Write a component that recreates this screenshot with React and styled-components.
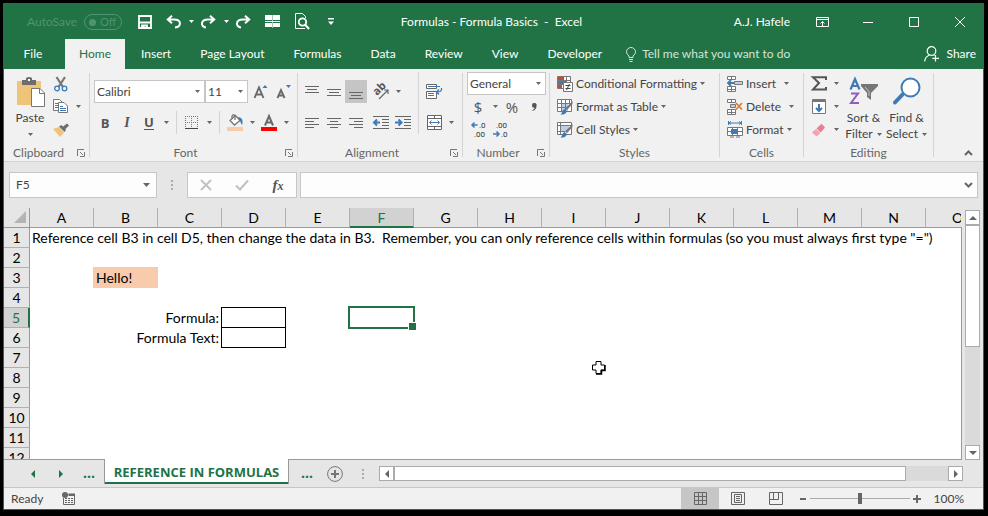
import React from 'react';
import styled, { createGlobalStyle, css } from 'styled-components';

const green = '#217346';
const ink = '#666666';
const blue = '#3f7ab5';

const GlobalStyle = createGlobalStyle`
  * { box-sizing: border-box; }
  body { margin: 0; background: #000; }
  body, button, input, select {
    font: 12px/16px Lato, "Open Sans", sans-serif;
    color: #444;
  }
  button, input, select { margin: 0; padding: 0; border: 0; background: none; border-radius: 0; }
  svg { display: block; flex: none; overflow: visible; }
`;

const Frame = styled.div`
  display: flex;
  height: 100vh;
  padding: 3px 4px 6px 3px;
  background: #000;
`;
const Window = styled.main`
  flex: 1;
  min-width: 0;
  display: flex;
  flex-direction: column;
  border: 1px solid ${green};
  background: #e6e6e6;
`;

/* Title bar */
const TitleBar = styled.header`
  display: grid;
  grid-template-columns: 1fr auto 1fr;
  align-items: center;
  height: 35px;
  background: ${green};
  color: #fff;
`;
const QuickAccess = styled.div`
  display: flex;
  align-items: center;
  padding-left: 23px;
`;
const AutoSave = styled.label`
  display: flex;
  align-items: center;
  gap: 7px;
  margin-right: 12px;
  padding-top: 1px;
  color: #4f9470;
`;
const Toggle = styled.button`
  display: flex;
  align-items: center;
  justify-content: space-between;
  width: 38px;
  height: 16px;
  padding: 0 5px 0 4px;
  border: 1px solid #4f9470;
  border-radius: 8px;
  color: #4f9470;
  font-size: 11px;
  line-height: 14px;
  &::before {
    content: "";
    width: 7px;
    height: 7px;
    border-radius: 50%;
    background: #4f9470;
  }
`;
const QuickButton = styled.button`
  display: grid;
  place-items: center;
  width: ${(p) => p.$w || 22}px;
  height: 24px;
  margin-right: ${(p) => p.$after || 0}px;
  color: #fff;
`;
const DocTitle = styled.h1`
  margin: 0;
  padding-right: 4px;
  font: inherit;
  white-space: pre;
`;
const WindowControls = styled.div`
  display: flex;
  align-items: center;
  justify-content: flex-end;
`;
const UserName = styled.span`
  margin-right: 9px;
`;
const ControlButton = styled.button`
  display: grid;
  place-items: center;
  width: 46px;
  height: 32px;
  color: #fff;
`;

/* Ribbon tabs */
const TabStrip = styled.nav`
  display: flex;
  align-items: stretch;
  gap: 3px;
  height: 30px;
  padding-right: 7px;
  background: ${green};
`;
const RibbonTab = styled.button`
  min-width: ${(p) => p.$min || 0}px;
  padding: 0 13px;
  color: ${(p) => (p.$active ? green : '#fff')};
  background: ${(p) => (p.$active ? '#f1f1f1' : 'transparent')};
  white-space: nowrap;
`;
const TellMe = styled.button`
  display: flex;
  align-items: center;
  gap: 6px;
  margin: 0 auto 0 8px;
  color: #d3e3da;
`;
const Share = styled.button`
  display: flex;
  align-items: center;
  gap: 7px;
  color: #fff;
`;

/* Ribbon */
const Ribbon = styled.section`
  display: flex;
  height: 93px;
  background: #f1f1f1;
  border-bottom: 1px solid #d2d2d2;
`;
const GroupBox = styled.section`
  flex: none;
  display: flex;
  flex-direction: column;
  justify-content: space-between;
  width: ${(p) => p.$w}px;
  padding: 3px 0 0 ${(p) => p.$pad}px;
`;
const GroupBody = styled.div`
  display: flex;
`;
const GroupFooter = styled.footer`
  display: flex;
  align-items: center;
  gap: 4px;
  margin-left: -${(p) => p.$pad}px;
  padding: 0 4px 0 ${(p) => (p.$launcher ? 0 : 4)}px;
  height: 16px;
  color: #666;
`;
const GroupTitle = styled.span`
  flex: 1;
  text-align: center;
`;
const Divider = styled.i`
  flex: none;
  width: 1px;
  margin: 4px 0;
  background: #d4d4d4;
`;
const ToolDivider = styled.i`
  flex: none;
  align-self: stretch;
  width: 1px;
  margin: 0 4px;
  background: #d4d4d4;
`;
const Column = styled.div`
  display: flex;
  flex-direction: column;
  gap: ${(p) => p.$gap || 0}px;
  padding-top: ${(p) => p.$top || 0}px;
`;
const ToolRow = styled.div`
  display: flex;
  align-items: center;
  height: 23px;
`;
const ToolButton = styled.button`
  display: grid;
  place-items: center;
  width: 22px;
  height: 23px;
  margin-left: ${(p) => p.$before || 0}px;
  background: ${(p) => (p.$on ? '#c5c5c5' : 'transparent')};
`;
const DropButton = styled.button`
  display: grid;
  place-items: center;
  width: 12px;
  height: 23px;
`;
const Letter = styled.span`
  font-size: ${(p) => p.$size || 14}px;
  font-family: "Open Sans", sans-serif;
  color: #555;
  ${(p) => p.$bold && css`font-weight: 700;`}
  ${(p) => p.$italic && css`font-style: italic; font-family: "Liberation Serif", serif; font-weight: 700;`}
  ${(p) => p.$under && css`border-bottom: 1px solid #555; line-height: 13px;`}
`;
const BigButton = styled.button`
  display: flex;
  flex-direction: column;
  align-items: center;
  width: ${(p) => p.$w}px;
  padding-top: 5px;
  white-space: nowrap;
`;
const BigCaption = styled.span`
  display: flex;
  align-items: center;
  gap: 4px;
  height: 16px;
`;
const BigArt = styled.span`
  height: 33px;
`;
const MenuButton = styled.button`
  display: flex;
  align-items: center;
  gap: 3px;
  height: 23px;
  white-space: nowrap;
`;
const MenuCaption = styled.span`
  padding-right: ${(p) => (p.$split ? 5 : 0)}px;
`;
const ComboBox = styled.label`
  display: grid;
  align-items: center;
  width: ${(p) => p.$w}px;
  height: 23px;
  border: 1px solid #c6c6c6;
  background: #fff;
  > select, > svg { grid-area: 1 / 1; }
  > svg { justify-self: end; margin-right: 4px; pointer-events: none; }
  > select { width: 100%; padding-left: 2px; appearance: none; outline: 0; }
`;
const Collapse = styled.button`
  align-self: flex-end;
  margin: 0 10px 5px auto;
`;

/* Formula bar */
const FormulaBar = styled.section`
  display: flex;
  align-items: stretch;
  height: 46px;
  padding: 10px 5px;
`;
const FieldBox = styled.div`
  display: flex;
  align-items: center;
  width: ${(p) => (p.$w ? p.$w + 'px' : 'auto')};
  flex: ${(p) => (p.$w ? 'none' : '1')};
  padding: 0 ${(p) => p.$pad ?? 6}px;
  margin-left: ${(p) => p.$before || 0}px;
  border: 1px solid #c6c6c6;
  background: #fdfdfd;
`;
const FieldInput = styled.input`
  flex: 1;
  min-width: 0;
  outline: 0;
`;
const Grip = styled.div`
  display: grid;
  place-items: center;
  width: ${(p) => p.$w}px;
`;
const FxButton = styled.button`
  flex: 1;
  display: grid;
  place-items: center;
  height: 24px;
`;
const FxLabel = styled.span`
  font: italic 700 15px/18px "Liberation Serif", serif;
  color: #555;
  > small { font-size: 12px; }
`;

/* Worksheet */
const WorkArea = styled.div`
  flex: 1;
  min-height: 0;
  display: flex;
  gap: 3px;
  padding-right: 3px;
`;
const Sheet = styled.div`
  position: relative;
  flex: 1;
  min-width: 0;
  overflow: hidden;
  padding-right: 1px;
  border-bottom: 1px solid #999;
  background: linear-gradient(#e6e6e6 0 19px, #999 19px);
`;
const SheetView = styled.div`
  height: 100%;
  overflow: hidden;
  background: linear-gradient(#e6e6e6 0 20px, #fff 20px);
`;
const Grid = styled.table`
  table-layout: fixed;
  width: 986px;
  border-spacing: 0;
  font-size: 14px;
  line-height: 19px;
  color: #000;
`;
const Corner = styled.th`
  width: 26px;
  height: 20px;
  padding: 0 3px 2px 0;
  border-right: 1px solid #999;
  border-bottom: 1px solid #999;
  > svg { margin-left: auto; }
`;
const ColumnHead = styled.th`
  width: 64px;
  height: 20px;
  padding: 1px 0 0;
  font-weight: 400;
  line-height: 18px;
  border-right: 1px solid #b0b0b0;
  border-bottom: 1px solid #999;
  ${(p) => p.$current && css`
    color: ${green};
    background: #d2d2d2;
    border-bottom: 2px solid ${green};
    line-height: 17px;
  `}
`;
const RowHead = styled.th`
  height: 20px;
  padding: 0;
  font-weight: 400;
  background: #e6e6e6;
  border-right: 1px solid #999;
  border-bottom: 1px solid #b0b0b0;
  ${(p) => p.$current && css`
    color: ${green};
    background: #d2d2d2;
    border-right: 2px solid ${green};
  `}
`;
const Cell = styled.td`
  position: relative;
  height: 20px;
  padding: 0;
  white-space: pre;
`;
const CellText = styled.div`
  display: flex;
  height: 20px;
  padding: 0 3px 0 2px;
  justify-content: ${(p) => (p.$right ? 'flex-end' : 'flex-start')};
`;
const CellBox = styled.div`
  height: 21px;
  margin: -1px 0 0 -1px;
  border: 1px solid ${(p) => p.$fill || '#000'};
  background: ${(p) => p.$fill || 'transparent'};
`;
const Selection = styled.div`
  position: absolute;
  inset: -2px -1px -1px -2px;
  border: 2px solid ${green};
  &::after {
    content: "";
    position: absolute;
    right: -4px;
    bottom: -4px;
    width: 7px;
    height: 7px;
    border: 1px solid #fff;
    background: ${green};
  }
`;
const Pointer = styled.svg`
  position: absolute;
  left: 587px;
  top: 152px;
`;
const ScrollTrack = styled.div`
  display: flex;
  flex-direction: ${(p) => (p.$vertical ? 'column' : 'row')};
  ${(p) => (p.$vertical ? css`width: 15px; margin-top: 2px;` : css`flex: 1; height: 15px;`)}
  background: #dadada;
`;
const ScrollButton = styled.button`
  display: grid;
  place-items: center;
  flex: none;
  width: 15px;
  height: 15px;
  border: 1px solid #ababab;
  background: #fff;
`;
const ScrollThumb = styled.div`
  flex: ${(p) => p.$share} 1 0;
  border: 1px solid #ababab;
  background: #fff;
`;
const ScrollRest = styled.div`
  flex: ${(p) => p.$share} 1 0;
`;

/* Sheet tabs and status bar */
const SheetTabs = styled.nav`
  display: flex;
  align-items: center;
  height: 27px;
  padding-right: 20px;
`;
const NavButton = styled.button`
  display: grid;
  place-items: center;
  width: 28px;
  height: 24px;
  padding-bottom: ${(p) => (p.$raised ? 2 : 0)}px;
  color: ${green};
  font: 700 14px/16px "Open Sans", sans-serif;
`;
const NavGroup = styled.div`
  display: flex;
  width: 100px;
  padding-left: 15px;
`;
const MoreGroup = styled.div`
  display: flex;
  align-items: center;
  padding: 0 2px 0 4px;
`;
const SheetTab = styled.button`
  align-self: flex-start;
  width: 185px;
  height: 25px;
  margin-top: -1px;
  position: relative;
  border: solid #999;
  border-width: 0 1px;
  box-shadow: inset 0 -2px 0 ${green};
  background: #fff;
  color: ${green};
  font: 700 13px/16px "Open Sans", sans-serif;
  white-space: nowrap;
`;
const StatusBar = styled.footer`
  display: flex;
  align-items: center;
  height: 22px;
  padding: 0 19px 0 7px;
  border-top: 1px solid #c6c6c6;
  background: #f1f1f1;
`;
const StatusText = styled.span`
  margin-right: 19px;
`;
const ViewButtons = styled.div`
  display: flex;
  align-self: stretch;
  margin-left: auto;
  margin-right: 1px;
`;
const ViewButton = styled.button`
  display: grid;
  place-items: center;
  width: 38px;
  background: ${(p) => (p.$on ? '#c6c6c6' : 'transparent')};
`;
const ZoomButton = styled.button`
  display: grid;
  place-items: center;
  width: 14px;
  height: 20px;
`;
const ZoomSlider = styled.input`
  appearance: none;
  width: 100px;
  height: 11px;
  background: linear-gradient(#ababab, #ababab) center / 100% 1px no-repeat;
  &::-webkit-slider-thumb {
    appearance: none;
    width: 4px;
    height: 11px;
    background: #666;
  }
`;
const ZoomValue = styled.output`
  width: 40px;
  text-align: right;
`;

/* Icons */
const Svg = ({ w = 16, h = w, children, ...rest }) => (
  <svg width={w} height={h} viewBox={`0 0 ${w} ${h}`} fill="none" stroke="currentColor" aria-hidden="true" {...rest}>
    {children}
  </svg>
);
const Caret = ({ color = ink, w = 5 }) => (
  <Svg w={w} h={Math.ceil(w / 2)} stroke="none">
    <path d={`M0 0H${w}L${w / 2} ${Math.ceil(w / 2)}Z`} fill={color} />
  </Svg>
);
const Arrow = ({ d, color = ink }) => (
  <Svg w={8} stroke="none"><path d={d} fill={color} /></Svg>
);
const left = 'M6 0V8L2 4Z';
const right = 'M2 0V8L6 4Z';
const up = 'M0 6H8L4 2Z';
const down = 'M0 2H8L4 6Z';

const SaveIcon = () => (
  <Svg w={14}><path d="M1 1H13V13H1ZM1 7.500H13M4 13V10.500H9V13" strokeWidth="1.800" /><path d="M5.500 10V13" strokeWidth="2" /></Svg>
);
const UndoIcon = () => (
  <Svg w={16} h={14} strokeWidth="2"><path d="M6 .8L1.800 4.500L6 8.200M2 4.500H8C16 4.500 15.500 12 9 12.500" /></Svg>
);
const RedoIcon = () => (
  <Svg w={16} h={14} strokeWidth="2"><path d="M10 .8L14.200 4.500L10 8.200M14 4.500H8C0 4.500 .5 12 6 12.500" /></Svg>
);
const PanesIcon = () => (
  <Svg w={15} h={13} stroke="none"><path fill="#fff" d="M0 0H7V5H0ZM8 0H15V5H8ZM0 6H15V7H0ZM0 8H7V12H0ZM8 8H15V12H8ZM7.200 0H7.800V13H7.200Z" /></Svg>
);
const PreviewIcon = () => (
  <Svg w={15} h={17}><path d="M10 15.500H.5V.5H7.500L10.500 3.500V5" /><circle cx="7.500" cy="9" r="3.700" strokeWidth="1.800" /><path d="M10 11.500L14 16" strokeWidth="2.200" /></Svg>
);
const CustomizeIcon = () => (
  <Svg w={6} h={7} stroke="none"><path fill="#fff" d="M0 0H6V1.500H0ZM0 3.500H6L3 7Z" /></Svg>
);
const RibbonModeIcon = () => (
  <Svg w={13} h={10}><path d="M.5 .5H12.500V9.500H.5ZM.5 2.500H12.500M6.500 9V4.500M4.500 6.500L6.500 4.500L8.500 6.500" /></Svg>
);
const BulbIcon = () => (
  <Svg w={10} h={15}><path d="M3 10.500V9C1.500 7.500 .5 6.500 .5 4.800A4.500 4.300 0 0 1 9.500 4.800C9.500 6.500 8.500 7.500 7 9V10.500ZM3 12.500H7M3.500 14.500H6.500" /></Svg>
);
const PersonIcon = () => (
  <Svg w={15} h={16} strokeWidth="1.200"><circle cx="7.500" cy="5" r="4.300" /><path d="M.6 15.500C1 11.500 3 10 5.500 9M9.500 9L10.500 9.500M11.500 9V15.500M8.300 12.300H15" /></Svg>
);

const PasteIcon = () => (
  <Svg w={29} h={31} stroke="none">
    <path d="M1 4H25V28H1Z" fill="#eec478" />
    <path d="M6 3H10V1Q13 -1 16 1V3H20V8H6Z" fill="#6d6d6d" /><path d="M12 2H14V4H12Z" fill="#fff" />
    <path d="M15.500 11.500H24L28.500 16V29.500H15.500Z" fill="#fff" stroke="#777" /><path d="M23.500 12V16.500H28" stroke="#777" />
  </Svg>
);
const CutIcon = () => (
  <Svg w={16} h={16}><path d="M3.500 1L10 11M12 1L5.500 11" stroke="#777" strokeWidth="2.200" /><circle cx="4" cy="12.500" r="2.300" stroke={blue} strokeWidth="1.300" /><circle cx="11.500" cy="12.500" r="2.300" stroke={blue} strokeWidth="1.300" /></Svg>
);
const CopyIcon = () => (
  <Svg w={16} h={15} stroke="#777"><path d="M.5 .5H6.500L9 3V11.500H.5Z" fill="#fff" /><path d="M2 4.500H6M2 6.500H6M2 8.500H5" stroke={blue} /><path d="M5.500 3.500H11L14.500 7V13.500H5.500Z" fill="#fff" /><path d="M7 7.500H10M7 9.500H13M7 11.500H13" stroke={blue} /></Svg>
);
const PainterIcon = () => (
  <Svg w={16} h={14} stroke="none"><path d="M0 6L6 4L11 9.500L7 14Z" fill="#eec478" /><path d="M6 3.500L8.500 2L13 7L11.500 9Z" fill="#6d6d6d" /><path d="M9.500 4L14 .5L16 2.500L12 6.500Z" fill="#6d6d6d" /></Svg>
);
const LauncherIcon = () => (
  <Svg w={8} h={8} stroke="#777"><path d="M.5 7V.5H7M3 3L6 6M7.500 3V7.500H3" /></Svg>
);
const GrowIcon = ({ shrink }) => (
  <Svg w={16} h={16} stroke="none">
    <path d={shrink ? 'M11 1H16L13.500 4Z' : 'M9.500 4H14.500L12 1Z'} fill={blue} />
    <path d={shrink ? 'M2.500 14L6 6L9.500 14M4 11.500H8' : 'M1.500 14L6 3.500L10.500 14M3 10.500H9'} stroke="#6a6a6a" strokeWidth="1.900" />
  </Svg>
);
const BordersIcon = () => (
  <Svg w={14} h={14} stroke="#777"><path d="M.5 0V12M6.500 0V12M12.500 0V12M0 .5H13M0 6.500H13" strokeDasharray="1 1" /><path d="M0 12.500H13" stroke="#444" /></Svg>
);
const FillIcon = () => (
  <Svg w={16} h={17} stroke="none"><path d="M3 6.500L8.500 1.500L13 6.500L7.500 11Z" fill="#fff" stroke="#777" strokeWidth="1.300" /><path d="M5 5V2Q6.500 -.5 8 2V6" stroke="#777" strokeWidth="1.300" /><path d="M11 3C15 3 16.500 7 15 11C13.500 9 13.500 7 11 3Z" fill={blue} /><path d="M0 13H16V17H0Z" fill="#f8cbad" /></Svg>
);
const FontColorIcon = () => (
  <Svg w={16} h={17} stroke="none"><path d="M4 11.500L8 2L12 11.500M5.500 8.500H10.500" stroke="#6a6a6a" strokeWidth="2" /><path d="M0 13H16V17H0Z" fill="#f00" /></Svg>
);
const LinesIcon = ({ rows }) => (
  <Svg w={14} h={14} stroke={ink}><path d={rows.map(([y, a, b]) => `M${a} ${y}.5H${b}`).join('')} /></Svg>
);
const AB = styled.tspan`font: 700 11px "Open Sans", sans-serif;`;
const OrientationIcon = () => (
  <Svg w={18} h={16} stroke="none"><text transform="translate(5 12) rotate(-45)" fill="#555"><AB>ab</AB></text><path d="M7 15L15.500 6.500M12 6H16V10" stroke="#666" strokeWidth="1.200" /></Svg>
);
const IndentIcon = ({ more }) => (
  <Svg w={16} h={13} stroke={ink}><path d="M0 .5H16M9 3.500H16M9 6.500H16M9 9.500H16M0 12.500H16" /><path d={more ? 'M0 6.500H6M3.500 3.500L6.500 6.500L3.500 9.500' : 'M1.500 6.500H7M4 3.500L1 6.500L4 9.500'} stroke={blue} strokeWidth="2" /></Svg>
);
const WrapIcon = () => (
  <Svg w={16} h={15} stroke={ink}><path d="M.5 .5H10.500V4.500H.5ZM.5 7.500H10.500V14.500H.5Z" fill="#fff" /><path d="M2 2.500H14M2 9.500H8M2 11.500H8" stroke={blue} /><path d="M15.500 4C16 7.500 14 8 11 8M13 5.500L10.500 8L13 10.500" stroke={blue} strokeWidth="1.300" /></Svg>
);
const MergeIcon = () => (
  <Svg w={15} h={15} stroke={ink}><path d="M.5 .5H14.500V14.500H.5ZM0 3.500H15M0 11.500H15M7.500 0V3.500M7.500 11.500V15" fill="#fff" /><path d="M2.500 7.500H12.500M4.500 5.500L2.500 7.500L4.500 9.500M10.500 5.500L12.500 7.500L10.500 9.500" stroke={blue} /></Svg>
);
const Digits = styled.tspan`font: 8px Roboto, sans-serif;`;
const DecimalIcon = ({ less }) => (
  <Svg w={16} h={19} stroke="none">
    <text x={less ? 4 : 9} y="8" fill="#333"><Digits>{less ? '.00' : '.0'}</Digits></text>
    <text x={less ? 9 : 4} y="17" fill="#333"><Digits>{less ? '.0' : '.00'}</Digits></text>
    <path d={less ? 'M1 14H7M4.500 11.500L7 14L4.500 16.500' : 'M2 5H7.500M4.500 2.500L2 5L4.500 7.500'} stroke={blue} strokeWidth="1.500" />
  </Svg>
);
const ConditionalIcon = () => (
  <Svg w={16} h={16} stroke="#777"><path d="M.5 .5H13.500V12.500H.5ZM.5 4.500H13.500M.5 8.500H13.500M4.500 0V13M9.500 0V13" fill="#fff" /><path d="M1 1H7V4H1ZM1 9H4V12H1Z" fill="#d24726" stroke="none" /><path d="M1 5H9V8H1Z" fill={blue} stroke="none" /><path d="M6.500 6.500H15.500V15.500H6.500Z" fill="#fff" /><path d="M8.500 9.500H13.500M8.500 12.500H13.500M12.500 8L9.500 14" stroke="#444" /></Svg>
);
const BrushArt = () => (
  <>
    <path d="M15.500 2V5L10 11L8 9.500Z" fill="#777" stroke="none" /><path d="M7.500 10L10 12C9 15 6.500 16 3.500 15.500C5.500 14 5 11 7.500 10Z" fill={blue} stroke="none" />
  </>
);
const TableIcon = () => (
  <Svg w={16} h={16} stroke="#777"><path d="M.5 .5H14.500V12.500H.5Z" fill="#fff" /><path d="M4 4H11V12H4Z" fill="#bdd0e6" stroke="none" /><path d="M.5 4.500H14M.5 8.500H10M4.500 .5V12M8.500 .5V12M12.500 .5V5" /><BrushArt /></Svg>
);
const CellStyleIcon = () => (
  <Svg w={16} h={16} stroke="#777"><path d="M.5 .5H14.500V12.500H.5Z" fill="#fff" /><path d="M4 4H12V10H4Z" fill="#bdd0e6" stroke="none" /><path d="M.5 3.500H14M.5 9.500H8M3.500 .5V12" /><BrushArt /></Svg>
);
const InsertIcon = () => (
  <Svg w={16} h={16} stroke="#777"><path d="M.5 .5H8.500V3.500H.5ZM4.500 .5V3.500M.5 10.500H8.500V15.500H.5ZM4.500 10V15.500M.5 13.500H8.500" fill="#fff" /><path d="M7.500 5.500H15.500V8.500H7.500Z" fill="#bdd0e6" /><path d="M1 7H7M4 4L1 7L4 10" stroke={blue} strokeWidth="1.800" /></Svg>
);
const DeleteIcon = () => (
  <Svg w={16} h={16} stroke="#777"><path d="M.5 .5H8.500V3.500H.5ZM4.500 .5V3.500M.5 10.500H8.500V15.500H.5ZM4.500 10V15.500M.5 13.500H8.500" fill="#fff" /><path d="M3.500 5.500H8.500V8.500H3.500Z" fill="#bdd0e6" /><path d="M9 4L15 10.500M15 4L9 10.500" stroke="#e07b28" strokeWidth="1.700" /></Svg>
);
const FormatIcon = () => (
  <Svg w={16} h={17} stroke="#777"><path d="M1.500 0V4M14.500 0V4M2 2H14M4 .5L2 2L4 3.500M12 .5L14 2L12 3.500" stroke={blue} /><path d="M.5 6.500H15.500V14.500H.5ZM.5 10.500H15.500M5.500 6.500V14.500M10.500 6.500V14.500M3 16H7M9 16H13" fill="#fff" /><path d="M4 8H10V13H4Z" fill={blue} stroke="none" /></Svg>
);
const SumIcon = () => (
  <Svg w={16} h={15} stroke="#555"><path d="M15 4V1.200H2L8 7L2 13.500H15V11" strokeWidth="2" /></Svg>
);
const FillDownIcon = () => (
  <Svg w={14} h={15} stroke="#777"><path d="M.5 .5H13.500V14.500H.5Z" fill="#fff" /><path d="M1 1H13V3H1Z" fill="#777" stroke="none" /><path d="M7 5V12M4 9L7 12L10 9" stroke={blue} strokeWidth="2" /></Svg>
);
const EraserIcon = () => (
  <Svg w={14} h={14} stroke="none"><path d="M0 9.500L4 6L8.500 10L4.500 13.500Z" fill="#f2a3ad" /><path d="M4.500 5.500L9.500 .8L13 4.500L8.800 9.500Z" fill="#e8808e" /></Svg>
);
const SortIcon = () => (
  <Svg w={30} h={28} stroke="none">
    <path d="M1.500 12.500L6 2L10.500 12.500M3 9H9" stroke={blue} strokeWidth="2.200" /><path d="M2 16.500H9L2 26H10" stroke="#8e5fb5" strokeWidth="2" />
    <path d="M12 7H29V9L22 16V23L18 20V16L12 9Z" fill="#777" /><path d="M16 10L20 14.500V19" stroke="#c4c4c4" />
  </Svg>
);
const FindIcon = () => (
  <Svg w={28} h={28} stroke={blue}><path d="M9.500 17.500L2 25.500" strokeWidth="4" strokeLinecap="round" /><circle cx="17.500" cy="10.500" r="9" fill="#fff" strokeWidth="2" /></Svg>
);
const ChevronIcon = ({ flip }) => (
  <Svg w={9} h={6} stroke="#666" strokeWidth="2"><path d={flip ? 'M1 5L4.500 1.500L8 5' : 'M1 1L4.500 4.500L8 1'} /></Svg>
);
const DotsIcon = () => (
  <Svg w={2} h={10} stroke="none"><path fill="#ababab" d="M0 0H2V2H0ZM0 4H2V6H0ZM0 8H2V10H0Z" /></Svg>
);
const AddSheetIcon = () => (
  <Svg w={16} h={16} stroke="#777"><circle cx="8" cy="8" r="7.400" /><path d="M4 8H12M8 4V12" strokeWidth="2" /></Svg>
);
const CommaIcon = () => (
  <Svg w={6} h={8} stroke="none"><path fill="#555" d="M1 2.500A2.300 2.300 0 1 1 5.500 3C5.500 5.500 4 7.500 1.500 8V7C3 6.500 3.500 5.500 3.500 4.700A2.200 2.200 0 0 1 1 2.500Z" /></Svg>
);
const MacroIcon = () => (
  <Svg w={14} h={14} stroke={ink}><circle cx="3" cy="3" r="3" fill={ink} stroke="none" /><path d="M1.500 6V12.500H12.500V2.500H6.500M7 2.500H12" /><path d="M6.500 1.500H13V4H6.500Z" fill={ink} stroke="none" /><path d="M3 6.500H11M3 8.500H11M3 10.500H11" strokeDasharray="2 1" /></Svg>
);
const NormalIcon = () => <Svg w={13} stroke={ink}><path d="M.5 .5H12.500V12.500H.5ZM4.500 0V13M8.500 0V13M0 4.500H13M0 8.500H13" /></Svg>;
const PageIcon = () => <Svg w={14} h={13} stroke={ink}><path d="M.5 .5H13.500V12.500H.5ZM3.500 2.500H10.500V10.500H3.500ZM5 4.500H9M5 6.500H9M5 8.500H9" /></Svg>;
const BreakIcon = () => <Svg w={14} h={13} stroke={ink}><path d="M.5 .5H13.500V12.500H.5ZM4.500 .5V7.500M0 7.500H9.500V0" /></Svg>;
const CellCursor = () => (
  <Pointer width="16" height="16" viewBox="0 0 16 16" aria-hidden="true">
    <path d="M5 1.500H10V5H13.500V10H10V13.500H5V10H1.500V5H5Z" fill="#fff" stroke="#000" />
    <path d="M5 14H10.500V10.500H14V5" fill="none" stroke="#000" strokeWidth="1.500" />
  </Pointer>
);

const topAlign = [[1, 0, 14], [4, 2, 12], [7, 0, 14]];
const midAlign = [[4, 0, 14], [7, 2, 12], [10, 0, 14]];
const lowAlign = [[7, 0, 14], [10, 2, 12], [13, 0, 14]];
const leftText = [[2, 0, 14], [5, 0, 9], [8, 0, 14], [11, 0, 9]];
const centerText = [[2, 0, 14], [5, 3, 11], [8, 0, 14], [11, 3, 11]];
const rightText = [[2, 0, 14], [5, 5, 14], [8, 0, 14], [11, 5, 14]];

const Group = ({ title, w, pad, launcher, children }) => (
  <>
    <GroupBox $w={w} $pad={pad} aria-label={title}>
      <GroupBody>{children}</GroupBody>
      <GroupFooter $pad={pad} $launcher={launcher}>
        <GroupTitle>{title}</GroupTitle>
        {launcher && <button aria-label={`${title} settings`}><LauncherIcon /></button>}
      </GroupFooter>
    </GroupBox>
    <Divider />
  </>
);
const Drop = ({ label }) => <DropButton aria-label={label}><Caret /></DropButton>;
const Combo = ({ label, value, ...rest }) => (
  <ComboBox {...rest}>
    <select aria-label={label} defaultValue={value}><option>{value}</option></select>
    <Caret />
  </ComboBox>
);
const Menu = ({ icon, children, split }) => (
  <MenuButton>{icon}<MenuCaption $split={split}>{children}</MenuCaption><Caret /></MenuButton>
);

const columns = 'ABCDEFGHIJKLMNO'.split('');
const rows = Array.from({ length: 12 }, (_, i) => i + 1);
const cells = {
  A1: <CellText>{'Reference cell B3 in cell D5, then change the data in B3.  Remember, you can only reference cells within formulas (so you must always first type "=")'}</CellText>,
  B3: <CellBox $fill="#f8cbad"><CellText>Hello!</CellText></CellBox>,
  C5: <CellText $right>Formula:</CellText>,
  C6: <CellText $right>Formula Text:</CellText>,
  D5: <CellBox />,
  D6: <CellBox />,
  F5: <Selection />,
};

const Worksheet = () => (
  <Sheet>
    <SheetView>
      <Grid>
        <thead>
          <tr>
            <Corner aria-label="Select all"><Svg w={12} stroke="none"><path d="M12 0V12H0Z" fill="#b4b4b4" /></Svg></Corner>
            {columns.map((c) => <ColumnHead key={c} $current={c === 'F'}>{c}</ColumnHead>)}
          </tr>
        </thead>
        <tbody>
          {rows.map((r) => (
            <tr key={r}>
              <RowHead $current={r === 5}>{r}</RowHead>
              {columns.map((c) => <Cell key={c}>{cells[c + r]}</Cell>)}
            </tr>
          ))}
        </tbody>
      </Grid>
    </SheetView>
    <CellCursor />
  </Sheet>
);

export default function App() {
  return (
    <Frame>
      <GlobalStyle />
      <Window>
        <TitleBar>
          <QuickAccess>
            <AutoSave>AutoSave<Toggle role="switch" aria-checked="false">Off</Toggle></AutoSave>
            <QuickButton aria-label="Save" $after={7}><SaveIcon /></QuickButton>
            <QuickButton aria-label="Undo"><UndoIcon /></QuickButton>
            <QuickButton aria-label="Undo history" $w={12}><Caret color="#fff" /></QuickButton>
            <QuickButton aria-label="Redo" $after={1}><RedoIcon /></QuickButton>
            <QuickButton aria-label="Redo history" $w={12}><Caret color="#fff" /></QuickButton>
            <QuickButton aria-label="Repeat" $after={7}><RedoIcon /></QuickButton>
            <QuickButton aria-label="Freeze panes" $after={8}><PanesIcon /></QuickButton>
            <QuickButton aria-label="Print preview" $after={7}><PreviewIcon /></QuickButton>
            <QuickButton aria-label="Customize toolbar"><CustomizeIcon /></QuickButton>
          </QuickAccess>
          <DocTitle>{'Formulas - Formula Basics  -  Excel'}</DocTitle>
          <WindowControls>
            <UserName>A.J. Hafele</UserName>
            <ControlButton aria-label="Ribbon display options"><RibbonModeIcon /></ControlButton>
            <ControlButton aria-label="Minimize"><Svg w={10}><path d="M0 5.500H10" /></Svg></ControlButton>
            <ControlButton aria-label="Maximize"><Svg w={10}><path d="M.5 .5H9.500V9.500H.5Z" /></Svg></ControlButton>
            <ControlButton aria-label="Close"><Svg w={10}><path d="M0 0L10 10M10 0L0 10" /></Svg></ControlButton>
          </WindowControls>
        </TitleBar>

        <TabStrip>
          <RibbonTab $min={58}>File</RibbonTab>
          <RibbonTab $active $min={60}>Home</RibbonTab>
          {['Insert', 'Page Layout', 'Formulas', 'Data', 'Review', 'View', 'Developer'].map((t) => <RibbonTab key={t}>{t}</RibbonTab>)}
          <TellMe><BulbIcon />Tell me what you want to do</TellMe>
          <Share><PersonIcon />Share</Share>
        </TabStrip>

        <Ribbon>
          <Group title="Clipboard" w={85} pad={8} launcher>
            <BigButton $w={36}>
              <BigArt><PasteIcon /></BigArt>
              <BigCaption>Paste</BigCaption>
              <BigCaption><Caret /></BigCaption>
            </BigButton>
            <Column>
              <ToolRow><ToolButton $before={2} aria-label="Cut"><CutIcon /></ToolButton></ToolRow>
              <ToolRow><ToolButton $before={2} aria-label="Copy"><CopyIcon /></ToolButton><Drop label="Copy options" /></ToolRow>
              <ToolRow><ToolButton $before={2} aria-label="Format painter"><PainterIcon /></ToolButton></ToolRow>
            </Column>
          </Group>

          <Group title="Font" w={207} pad={4} launcher>
            <Column $top={8} $gap={8}>
              <ToolRow>
                <Combo label="Font name" value="Calibri" $w={111} />
                <Combo label="Font size" value="11" $w={43} />
                <ToolButton $before={2} aria-label="Increase font size"><GrowIcon /></ToolButton>
                <ToolButton aria-label="Decrease font size"><GrowIcon shrink /></ToolButton>
              </ToolRow>
              <ToolRow>
                <ToolButton aria-label="Bold"><Letter $bold $size={13}>B</Letter></ToolButton>
                <ToolButton aria-label="Italic"><Letter $italic>I</Letter></ToolButton>
                <ToolButton aria-label="Underline"><Letter $bold $size={13} $under>U</Letter></ToolButton>
                <Drop label="Underline options" />
                <ToolDivider />
                <ToolButton aria-label="Borders"><BordersIcon /></ToolButton>
                <Drop label="Border options" />
                <ToolDivider />
                <ToolButton aria-label="Fill color"><FillIcon /></ToolButton>
                <Drop label="Fill color options" />
                <ToolButton aria-label="Font color"><FontColorIcon /></ToolButton>
                <Drop label="Font color options" />
              </ToolRow>
            </Column>
          </Group>

          <Group title="Alignment" w={164} pad={3} launcher>
            <Column $top={8} $gap={8}>
              <ToolRow>
                <ToolButton aria-label="Top align"><LinesIcon rows={topAlign} /></ToolButton>
                <ToolButton aria-label="Middle align"><LinesIcon rows={midAlign} /></ToolButton>
                <ToolButton $on aria-label="Bottom align"><LinesIcon rows={lowAlign} /></ToolButton>
                <ToolButton $before={3} aria-label="Orientation"><OrientationIcon /></ToolButton>
                <Drop label="Orientation options" />
              </ToolRow>
              <ToolRow>
                <ToolButton aria-label="Align left"><LinesIcon rows={leftText} /></ToolButton>
                <ToolButton aria-label="Center"><LinesIcon rows={centerText} /></ToolButton>
                <ToolButton aria-label="Align right"><LinesIcon rows={rightText} /></ToolButton>
                <ToolButton $before={3} aria-label="Decrease indent"><IndentIcon /></ToolButton>
                <ToolButton aria-label="Increase indent"><IndentIcon more /></ToolButton>
              </ToolRow>
            </Column>
            <ToolDivider />
            <Column $top={8} $gap={8}>
              <ToolRow><ToolButton aria-label="Wrap text"><WrapIcon /></ToolButton></ToolRow>
              <ToolRow><ToolButton aria-label="Merge and center"><MergeIcon /></ToolButton><Drop label="Merge options" /></ToolRow>
            </Column>
          </Group>

          <Group title="Number" w={86} pad={4} launcher>
            <Column>
              <Combo label="Number format" value="General" $w={79} />
              <ToolRow>
                <ToolButton aria-label="Currency"><Letter $size={15}>$</Letter></ToolButton>
                <Drop label="Currency options" />
                <ToolButton aria-label="Percent"><Letter $size={15}>%</Letter></ToolButton>
                <ToolButton aria-label="Comma"><CommaIcon /></ToolButton>
              </ToolRow>
              <ToolRow>
                <ToolButton aria-label="Increase decimal"><DecimalIcon /></ToolButton>
                <ToolButton aria-label="Decrease decimal"><DecimalIcon less /></ToolButton>
              </ToolRow>
            </Column>
          </Group>

          <Group title="Styles" w={169} pad={7}>
            <Column>
              <Menu icon={<ConditionalIcon />}>Conditional Formatting</Menu>
              <Menu icon={<TableIcon />}>Format as Table</Menu>
              <Menu icon={<CellStyleIcon />}>Cell Styles</Menu>
            </Column>
          </Group>

          <Group title="Cells" w={83} pad={7}>
            <Column>
              <Menu split icon={<InsertIcon />}>Insert</Menu>
              <Menu split icon={<DeleteIcon />}>Delete</Menu>
              <Menu icon={<FormatIcon />}>Format</Menu>
            </Column>
          </Group>

          <Group title="Editing" w={129} pad={4}>
            <Column>
              <ToolRow><ToolButton aria-label="AutoSum"><SumIcon /></ToolButton><Drop label="AutoSum options" /></ToolRow>
              <ToolRow><ToolButton aria-label="Fill"><FillDownIcon /></ToolButton><Drop label="Fill options" /></ToolRow>
              <ToolRow><ToolButton aria-label="Clear"><EraserIcon /></ToolButton><Drop label="Clear options" /></ToolRow>
            </Column>
            <BigButton $w={43}>
              <BigArt><SortIcon /></BigArt>
              <BigCaption>Sort &amp;</BigCaption>
              <BigCaption>Filter<Caret /></BigCaption>
            </BigButton>
            <BigButton $w={43}>
              <BigArt><FindIcon /></BigArt>
              <BigCaption>Find &amp;</BigCaption>
              <BigCaption>Select<Caret /></BigCaption>
            </BigButton>
          </Group>
          <Collapse aria-label="Collapse ribbon"><ChevronIcon flip /></Collapse>
        </Ribbon>

        <FormulaBar>
          <FieldBox $w={148}>
            <FieldInput aria-label="Name box" defaultValue="F5" />
            <button aria-label="Named ranges"><Caret w={7} /></button>
          </FieldBox>
          <Grip $w={30}><DotsIcon /></Grip>
          <FieldBox $w={110} $pad={0}>
            <FxButton aria-label="Cancel"><Svg w={12}><path d="M1 1L11 11M11 1L1 11" stroke="#c2c2c2" strokeWidth="2" /></Svg></FxButton>
            <FxButton aria-label="Enter"><Svg w={14} h={12}><path d="M1 6.500L5 10.500L13 1.500" stroke="#c2c2c2" strokeWidth="2.200" /></Svg></FxButton>
            <FxButton aria-label="Insert function"><FxLabel>f<small>x</small></FxLabel></FxButton>
          </FieldBox>
          <FieldBox $before={3} $pad={4}>
            <FieldInput aria-label="Formula" defaultValue="" />
            <button aria-label="Expand formula bar"><ChevronIcon /></button>
          </FieldBox>
        </FormulaBar>

        <WorkArea>
          <Worksheet />
          <ScrollTrack $vertical role="scrollbar" aria-label="Vertical scroll" aria-valuenow={0}>
            <ScrollButton aria-label="Scroll up"><Arrow d={up} /></ScrollButton>
            <ScrollThumb $share={121} />
            <ScrollRest $share={99} />
            <ScrollButton aria-label="Scroll down"><Arrow d={down} /></ScrollButton>
          </ScrollTrack>
        </WorkArea>

        <SheetTabs>
          <NavGroup>
            <NavButton aria-label="Previous sheet"><Arrow d={left} color={green} /></NavButton>
            <NavButton aria-label="Next sheet"><Arrow d={right} color={green} /></NavButton>
            <NavButton $raised aria-label="Earlier sheets">...</NavButton>
          </NavGroup>
          <SheetTab>REFERENCE IN FORMULAS</SheetTab>
          <MoreGroup>
            <NavButton $raised aria-label="Later sheets">...</NavButton>
            <NavButton aria-label="New sheet"><AddSheetIcon /></NavButton>
            <Grip $w={28}><DotsIcon /></Grip>
          </MoreGroup>
          <ScrollTrack role="scrollbar" aria-label="Horizontal scroll" aria-orientation="horizontal" aria-valuenow={0}>
            <ScrollButton aria-label="Scroll left"><Arrow d={left} /></ScrollButton>
            <ScrollThumb $share={513} />
            <ScrollRest $share={42} />
            <ScrollButton aria-label="Scroll right"><Arrow d={right} /></ScrollButton>
          </ScrollTrack>
        </SheetTabs>

        <StatusBar>
          <StatusText>Ready</StatusText>
          <button aria-label="Record macro"><MacroIcon /></button>
          <ViewButtons>
            <ViewButton $on aria-label="Normal"><NormalIcon /></ViewButton>
            <ViewButton aria-label="Page layout"><PageIcon /></ViewButton>
            <ViewButton aria-label="Page break preview"><BreakIcon /></ViewButton>
          </ViewButtons>
          <ZoomButton aria-label="Zoom out"><Svg w={8} stroke={ink} strokeWidth="2"><path d="M1 4H7" /></Svg></ZoomButton>
          <ZoomSlider type="range" aria-label="Zoom" min="0" max="200" defaultValue="100" />
          <ZoomButton aria-label="Zoom in"><Svg w={8} stroke={ink} strokeWidth="2"><path d="M0 4H8M4 0V8" /></Svg></ZoomButton>
          <ZoomValue>100%</ZoomValue>
        </StatusBar>
      </Window>
    </Frame>
  );
}
